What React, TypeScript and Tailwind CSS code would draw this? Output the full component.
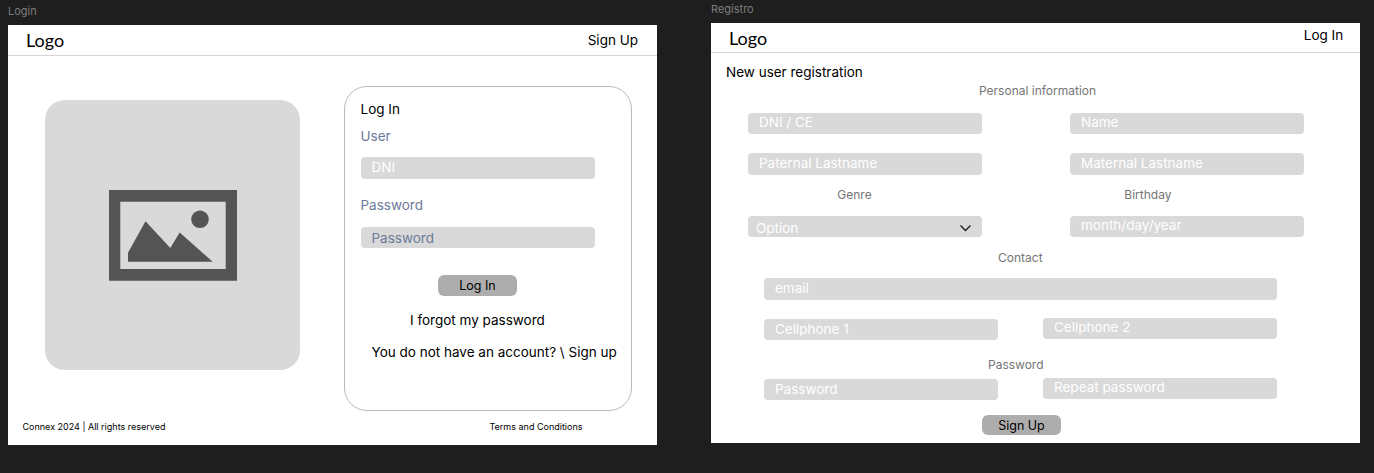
import type { ReactNode } from "react";

const inter = "font-['Inter',sans-serif] whitespace-nowrap";

function Field({ children, className }: { children: ReactNode; className: string }) {
  return (
    <div className={`flex items-start rounded-[4px] bg-[#d9d9d9] text-[13.5px] ${className}`}>
      {children}
    </div>
  );
}

function ActionButton({ children, className }: { children: ReactNode; className: string }) {
  return (
    <button className={`block h-[20.5px] w-[79px] rounded-[6px] bg-[#adadad] text-center text-[12.5px] leading-[22px] text-black ${className}`}>
      {children}
    </button>
  );
}

function PictureIcon() {
  return (
    <svg width="128" height="91" viewBox="0 0 128 91" fill="#545454">
      <path fillRule="evenodd" d="M0 0H128V90.7H0ZM11.3 11.8V79H116.7V11.8Z" />
      <circle cx="91" cy="29.3" r="8.8" />
      <path d="M19 71.8V62.8L36.5 31.3L61.3 58L70.7 42.5L103.7 71.8Z" />
    </svg>
  );
}

function LoginFrame() {
  return (
    <section className="ml-2 w-[649px]">
      <h2 className="h-[25px] pt-[2px] text-[11px] leading-[18px] text-[#7d7d7d]">Login</h2>
      <div className="flex h-[419.5px] flex-col bg-white">
        <header className="flex h-[31px] justify-between border-b border-[#d4d4d4] pr-[19px] pl-[18px]">
          <span className="font-['Lato',sans-serif] text-[18px] leading-[30px]">Logo</span>
          <a className="pt-[5px] text-[13.5px] leading-5">Sign Up</a>
        </header>
        <div className="flex h-[355px] pl-[37px]">
          <div className="mt-11 flex h-[270px] w-[255px] justify-center rounded-[20px] bg-[#d9d9d9] pt-[90px]">
            <PictureIcon />
          </div>
          <div className="mt-[30px] ml-[44px] h-[324.5px] w-[288px] rounded-[23px] border border-[#b9b9b9] pt-3 pl-[15.5px] text-[13.5px] leading-5">
            <h3>Log In</h3>
            <div className="mt-[7px] text-[#6b7a99]">User</div>
            <Field className="mt-[11.3px] h-[21.5px] w-[234px] pl-[11px] leading-5 text-white">DNI</Field>
            <div className="mt-[16.2px] text-[#6b7a99]">Password</div>
            <Field className="mt-[12.2px] h-[21.3px] w-[234px] pt-px pl-[11px] leading-5 text-[#6b7a99]">Password</Field>
            <ActionButton className="mt-[26.7px] ml-[77.5px]">Log In</ActionButton>
            <div className="mt-[14.6px] ml-[49.5px]">I forgot my password</div>
            <div className="mt-[12px] ml-[11px]">You do not have an account? \ Sign up</div>
          </div>
        </div>
        <footer className="flex justify-between pt-[6px] pr-[74.5px] pl-[14.5px] text-[9px] leading-5">
          <span>Connex 2024 | All rights reserved</span>
          <span>Terms and Conditions</span>
        </footer>
      </div>
    </section>
  );
}

function RegisterFrame() {
  return (
    <section className="ml-[54px] w-[648.7px]">
      <h2 className="h-[23px] text-[11px] leading-[18px] text-[#7d7d7d]">Registro</h2>
      <div className="h-[419.5px] bg-white">
        <header className="flex h-[30px] justify-between border-b border-[#d4d4d4] pr-[16.5px] pl-[18px]">
          <span className="font-['Lato',sans-serif] text-[18px] leading-[30px]">Logo</span>
          <a className="pt-[2px] text-[13.5px] leading-5">Log In</a>
        </header>
        <h3 className="pt-[9px] pl-[15px] text-[13.5px] leading-5">New user registration</h3>
        <div className="pt-px pl-[268px] text-[12px] leading-4 text-[#757575]">Personal information</div>
        <div className="mt-[13.7px] ml-[37px] flex gap-[88px] text-white">
          <Field className="h-[21.3px] w-[234px] pl-[11px] leading-[18.5px]">DNI / CE</Field>
          <Field className="h-[21.3px] w-[234px] pl-[11px] leading-[18.5px]">Name</Field>
        </div>
        <div className="mt-[19.5px] ml-[37px] flex gap-[88px] text-white">
          <Field className="h-[21.5px] w-[234px] pl-[11px] leading-5">Paternal Lastname</Field>
          <Field className="h-[21.5px] w-[234px] pl-[11px] leading-5">Maternal Lastname</Field>
        </div>
        <div className="mt-[12px] flex pl-[126.3px] text-[12px] leading-4 text-[#757575]">
          <span className="w-[287px]">Genre</span>
          <span>Birthday</span>
        </div>
        <div className="mt-[12.7px] ml-[37px] flex gap-[88px] text-white">
          <Field className="h-[21.3px] w-[234px] justify-between pt-[2.3px] pr-[10px] pl-[8px] leading-5">
            Option
            <svg className="mt-[5px]" width="13" height="10" viewBox="0 0 13 10" fill="none" stroke="#1e1e1e" strokeWidth="1.4">
              <path d="M1.5 2.5L6.5 7.5L11.5 2.5" />
            </svg>
          </Field>
          <Field className="h-[21.3px] w-[234px] pl-[11px] leading-[18.5px]">month/day/year</Field>
        </div>
        <div className="mt-[13.2px] pl-[287px] text-[12px] leading-4 text-[#757575]">Contact</div>
        <Field className="mt-[12px] ml-[53px] h-[21.6px] w-[513px] pl-[11px] leading-5 text-white">email</Field>
        <div className="mt-[18px] ml-[53px] flex gap-[45px] text-white">
          <Field className="mt-[1.2px] h-[21.5px] w-[234px] pl-[11px] leading-5">Cellphone 1</Field>
          <Field className="h-[21.3px] w-[234px] pl-[11px] leading-[19px]">Cellphone 2</Field>
        </div>
        <div className="mt-[16.3px] pl-[277px] text-[12px] leading-4 text-[#757575]">Password</div>
        <div className="mt-[4.8px] ml-[53px] flex gap-[45px] text-white">
          <Field className="mt-[1.3px] h-[21.5px] w-[234px] pl-[11px] leading-5">Password</Field>
          <Field className="h-[21.3px] w-[234px] pl-[11px] leading-[19px]">Repeat password</Field>
        </div>
        <ActionButton className="mt-[14.4px] ml-[271px]">Sign Up</ActionButton>
      </div>
    </section>
  );
}

export default function App() {
  return (
    <main className={`flex h-[473px] w-[1374px] overflow-hidden bg-[#1e1e1e] text-black ${inter}`}>
      <LoginFrame />
      <RegisterFrame />
    </main>
  );
}
